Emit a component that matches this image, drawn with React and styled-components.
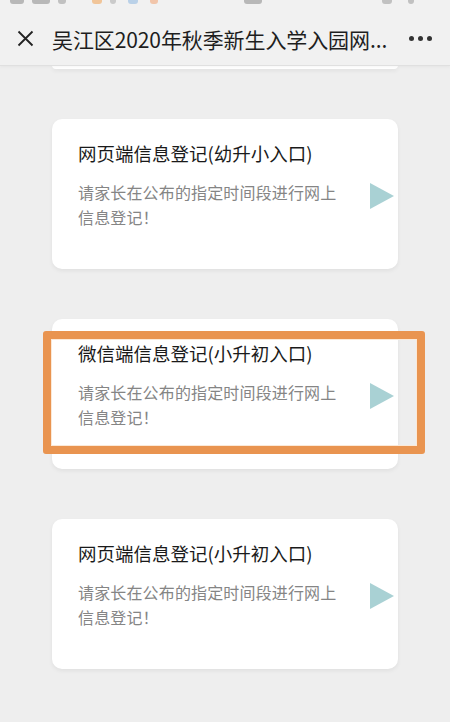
import React from 'react';
import styled, { createGlobalStyle } from 'styled-components';

const Global = createGlobalStyle`
  html, body {
    margin: 0;
    padding: 0;
    background: #eeeeee;
    font-family: "Noto Sans CJK SC", "Noto Sans", sans-serif;
  }
`;

const Page = styled.div`
  width: 450px;
  height: 722px;
  overflow: hidden;
  background: #eeeeee;
  display: flex;
  flex-direction: column;
  position: relative;
`;

const StatusBar = styled.div`
  height: 12px;
  background: #f1f1f1;
  display: flex;
  align-items: flex-start;
  padding: 0 10px;
  gap: 8px;
  overflow: hidden;
`;

const StatusBit = styled.span`
  display: block;
  width: ${p => p.w}px;
  height: 4px;
  margin-left: ${p => p.ml || 0}px;
  border-radius: 0 0 3px 3px;
  background: ${p => p.c};
  opacity: 0.55;
`;

const NavBar = styled.div`
  height: 53px;
  background: #f1f1f1;
  display: flex;
  align-items: center;
  padding: 0 18px 0 17px;
  box-shadow: 0 1px 0 #e0e0e0, 0 2px 3px rgba(0, 0, 0, 0.04);
  position: relative;
  z-index: 2;
`;

const NavTitle = styled.div`
  flex: 1;
  margin-left: 18px;
  font-size: 21px;
  color: #1e1e1e;
  white-space: nowrap;
  overflow: hidden;
  letter-spacing: -0.1px;
`;

const Dots = styled.div`
  display: flex;
  gap: 4px;
  margin-left: 10px;
`;

const Dot = styled.span`
  width: 5px;
  height: 5px;
  border-radius: 50%;
  background: #333;
`;

const List = styled.div`
  display: flex;
  flex-direction: column;
  align-items: center;
  gap: 50px;
`;

const CardTail = styled.div`
  width: 346px;
  height: 4px;
  background: #fff;
  border-radius: 0 0 10px 10px;
  box-shadow: 0 2px 4px rgba(0, 0, 0, 0.06);
`;

const Card = styled.div`
  position: relative;
  width: 346px;
  height: 150px;
  box-sizing: border-box;
  background: #fff;
  border-radius: 10px;
  box-shadow: 0 2px 4px rgba(0, 0, 0, 0.06);
  padding: 21px 4px 0 26px;
`;

const CardTitle = styled.div`
  font-size: 18.5px;
  line-height: 26px;
  color: #1a1a1a;
`;

const Row = styled.div`
  display: flex;
  align-items: flex-start;
  justify-content: space-between;
  margin-top: 14px;
`;

const Desc = styled.div`
  width: 264px;
  font-size: 16px;
  line-height: 25px;
  color: #858585;
  letter-spacing: 0.15px;
`;

const Arrow = styled.div`
  width: 0;
  height: 0;
  margin-top: 3px;
  border-top: 13px solid transparent;
  border-bottom: 13px solid transparent;
  border-left: 24px solid #a9d1d4;
`;

const Highlight = styled.div`
  position: absolute;
  left: -9px;
  top: 12px;
  width: 382px;
  height: 123px;
  box-sizing: border-box;
  border: 8px solid #e99450;
  border-radius: 3px;
  box-shadow: inset 0 0 0 1px #fbe9d8;
  pointer-events: none;
`;

const items = [
  { title: '网页端信息登记(幼升小入口)' },
  { title: '微信端信息登记(小升初入口)', marked: true },
  { title: '网页端信息登记(小升初入口)' },
];

const CloseIcon = () => (
  <svg width="17" height="17" viewBox="0 0 17 17">
    <path d="M1.5 1.5L15.5 15.5M15.5 1.5L1.5 15.5" stroke="#222" strokeWidth="1.8" fill="none" />
  </svg>
);

export default function App() {
  return (
    <Page>
      <Global />
      <StatusBar>
        <StatusBit w={14} c="#888" />
        <StatusBit w={18} c="#888" />
        <StatusBit w={8} c="#999" />
        <StatusBit w={10} ml={18} c="#f0a050" />
        <StatusBit w={6} c="#aaa" />
        <StatusBit w={10} ml={4} c="#8cb6e0" />
        <StatusBit w={8} ml={4} c="#f0a070" />
        <StatusBit w={18} ml={78} c="#888" />
        <StatusBit w={10} ml={112} c="#999" />
        <StatusBit w={6} ml={8} c="#999" />
      </StatusBar>
      <NavBar>
        <CloseIcon />
        <NavTitle>吴江区2020年秋季新生入学入园网...</NavTitle>
        <Dots>
          <Dot />
          <Dot />
          <Dot />
        </Dots>
      </NavBar>
      <List>
        <CardTail />
        {items.map((it, i) => (
          <Card key={i}>
            <CardTitle>{it.title}</CardTitle>
            <Row>
              <Desc>请家长在公布的指定时间段进行网上信息登记！</Desc>
              <Arrow />
            </Row>
            {it.marked && <Highlight />}
          </Card>
        ))}
      </List>
    </Page>
  );
}
